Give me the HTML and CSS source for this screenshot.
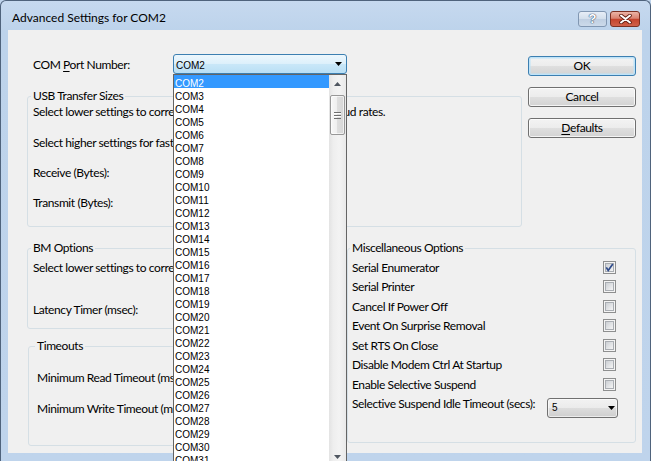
FILE: index.html
```html
<!DOCTYPE html>
<html>
<head>
<meta charset="utf-8">
<title>Advanced Settings for COM2</title>
<link rel="stylesheet" href="styles.css">
</head>
<body>
<div class="window">
  <div class="titlebar">
    <div class="title">Advanced Settings for COM2</div>
    <div class="caption-btns">
      <div class="cap help">?</div>
      <div class="cap close">
        <svg width="13" height="10" viewBox="0 0 13 10"><path d="M2 1.5L11 8.5M11 1.5L2 8.5" stroke="#5e1c10" stroke-width="3.6" stroke-linecap="round"/><path d="M2 1.5L11 8.5M11 1.5L2 8.5" stroke="#fff" stroke-width="2" stroke-linecap="round"/></svg>
      </div>
    </div>
  </div>
  <div class="content">
    <div class="top">
      <div class="left">
        <div class="port-row">
          <span class="port-label">COM <u>P</u>ort Number:</span>
          <div class="combo hot"><span class="combo-text">COM2</span><svg class="arrow" width="7" height="4" viewBox="0 0 7 4"><path d="M0 0H7L3.5 4Z" fill="#000"/></svg></div>
        </div>
        <fieldset class="group usb">
          <legend>USB Transfer Sizes</legend>
          <div class="line">Select lower settings to correct performance problems at low baud rates.</div>
          <div class="line g16">Select higher settings for faster performance.</div>
          <div class="line g15">Receive (Bytes):</div>
          <div class="line g15">Transmit (Bytes):</div>
        </fieldset>
      </div>
      <div class="buttons">
        <div class="btn default">OK</div>
        <div class="btn">Cancel</div>
        <div class="btn"><u>D</u>efaults</div>
      </div>
    </div>
    <div class="bottom">
      <div class="bottom-left">
        <fieldset class="group bm">
          <legend>BM Options</legend>
          <div class="line clip g4">Select lower settings to correct response problems.</div>
          <div class="line clip g27">Latency Timer (msec):</div>
        </fieldset>
        <fieldset class="group timeouts">
          <legend>Timeouts</legend>
          <div class="line clip g16">Minimum Read Timeout (msec):</div>
          <div class="line clip g16">Minimum Write Timeout (msec):</div>
        </fieldset>
      </div>
      <fieldset class="group misc">
        <legend>Miscellaneous Options</legend>
        <div class="opt"><span>Serial Enumerator</span>
          <svg class="chk" width="13" height="13" viewBox="0 0 13 13"><defs><linearGradient id="cbg" x1="0" y1="0" x2="1" y2="1"><stop offset="0" stop-color="#c9cdd2"/><stop offset="1" stop-color="#f7f7f7"/></linearGradient></defs><rect x=".5" y=".5" width="12" height="12" fill="#f4f4f4" stroke="#8e8f8f"/><rect x="2.5" y="2.5" width="8" height="8" fill="url(#cbg)" stroke="#a9adb2"/><path d="M3.3 6.4L5.2 9.4L9.8 3" fill="none" stroke="#2f4b8a" stroke-width="1.7"/></svg></div>
        <div class="opt"><span>Serial Printer</span>
          <svg class="chk" width="13" height="13" viewBox="0 0 13 13"><rect x=".5" y=".5" width="12" height="12" fill="#f4f4f4" stroke="#8e8f8f"/><rect x="2.5" y="2.5" width="8" height="8" fill="url(#cbg)" stroke="#a9adb2"/></svg></div>
        <div class="opt"><span>Cancel If Power Off</span>
          <svg class="chk" width="13" height="13" viewBox="0 0 13 13"><rect x=".5" y=".5" width="12" height="12" fill="#f4f4f4" stroke="#8e8f8f"/><rect x="2.5" y="2.5" width="8" height="8" fill="url(#cbg)" stroke="#a9adb2"/></svg></div>
        <div class="opt"><span>Event On Surprise Removal</span>
          <svg class="chk" width="13" height="13" viewBox="0 0 13 13"><rect x=".5" y=".5" width="12" height="12" fill="#f4f4f4" stroke="#8e8f8f"/><rect x="2.5" y="2.5" width="8" height="8" fill="url(#cbg)" stroke="#a9adb2"/></svg></div>
        <div class="opt"><span>Set RTS On Close</span>
          <svg class="chk" width="13" height="13" viewBox="0 0 13 13"><rect x=".5" y=".5" width="12" height="12" fill="#f4f4f4" stroke="#8e8f8f"/><rect x="2.5" y="2.5" width="8" height="8" fill="url(#cbg)" stroke="#a9adb2"/></svg></div>
        <div class="opt"><span>Disable Modem Ctrl At Startup</span>
          <svg class="chk" width="13" height="13" viewBox="0 0 13 13"><rect x=".5" y=".5" width="12" height="12" fill="#f4f4f4" stroke="#8e8f8f"/><rect x="2.5" y="2.5" width="8" height="8" fill="url(#cbg)" stroke="#a9adb2"/></svg></div>
        <div class="opt"><span>Enable Selective Suspend</span>
          <svg class="chk" width="13" height="13" viewBox="0 0 13 13"><rect x=".5" y=".5" width="12" height="12" fill="#f4f4f4" stroke="#8e8f8f"/><rect x="2.5" y="2.5" width="8" height="8" fill="url(#cbg)" stroke="#a9adb2"/></svg></div>
        <div class="opt last"><span>Selective Suspend Idle Timeout (secs):</span>
          <div class="combo small"><span class="combo-text">5</span><svg class="arrow" width="7" height="4" viewBox="0 0 7 4"><path d="M0 0H7L3.5 4Z" fill="#000"/></svg></div>
        </div>
      </fieldset>
    </div>

    <div class="droplist">
      <div class="items">
        <div class="item sel">COM2</div>
        <div class="item">COM3</div>
        <div class="item">COM4</div>
        <div class="item">COM5</div>
        <div class="item">COM6</div>
        <div class="item">COM7</div>
        <div class="item">COM8</div>
        <div class="item">COM9</div>
        <div class="item">COM10</div>
        <div class="item">COM11</div>
        <div class="item">COM12</div>
        <div class="item">COM13</div>
        <div class="item">COM14</div>
        <div class="item">COM15</div>
        <div class="item">COM16</div>
        <div class="item">COM17</div>
        <div class="item">COM18</div>
        <div class="item">COM19</div>
        <div class="item">COM20</div>
        <div class="item">COM21</div>
        <div class="item">COM22</div>
        <div class="item">COM23</div>
        <div class="item">COM24</div>
        <div class="item">COM25</div>
        <div class="item">COM26</div>
        <div class="item">COM27</div>
        <div class="item">COM28</div>
        <div class="item">COM29</div>
        <div class="item">COM30</div>
        <div class="item">COM31</div>
      </div>
      <div class="vscroll">
        <div class="sb-btn"><svg width="7" height="4" viewBox="0 0 7 4"><path d="M3.5 0L7 4H0Z" fill="#4f5660"/></svg></div>
        <div class="thumb"><svg width="7" height="7" viewBox="0 0 7 7"><path d="M0 .5H7M0 3.5H7M0 6.5H7" stroke="#6f6f6f"/><path d="M0 1.5H7M0 4.5H7" stroke="#fff"/></svg></div>
        <div class="sb-fill"></div>
        <div class="sb-btn"><svg width="7" height="4" viewBox="0 0 7 4"><path d="M0 0H7L3.5 4Z" fill="#4f5660"/></svg></div>
      </div>
    </div>
  </div>
</div>
</body>
</html>
```

FILE: styles.css
```css
* { box-sizing: border-box; }
html, body { margin: 0; padding: 0; }
body {
  width: 651px;
  height: 461px;
  overflow: hidden;
  background: #bfd4ec;
  font-family: "Lato", "Open Sans", sans-serif;
  font-size: 12px;
  letter-spacing: -0.4px;
  color: #000;
}
u { text-decoration: underline; text-underline-offset: 2px; }

.window {
  width: 651px;
  height: 461px;
  border: 1px solid #4f637c;
  border-bottom: none;
  border-radius: 6px 6px 0 0;
  background: linear-gradient(#c6d9ef, #bdd3eb 30px, #bfd4ec);
  display: flex;
  flex-direction: column;
}

.titlebar {
  flex: none;
  height: 29px;
  display: flex;
  justify-content: space-between;
  align-items: flex-start;
  padding-left: 11px;
}
.title { margin-top: 9px; line-height: 15px; letter-spacing: 0; }
.caption-btns { display: flex; gap: 3px; margin-top: 10px; margin-right: 10px; }
.cap {
  height: 16px;
  border-radius: 3px;
  display: flex;
  align-items: center;
  justify-content: center;
}
.cap.help {
  width: 29px;
  border: 1px solid #8197b2;
  background: linear-gradient(#e7eef7, #d3dfec 48%, #bfcfe2 52%, #ccdaea);
  color: #fff;
  font: bold 13px "Liberation Sans", sans-serif;
  letter-spacing: 0;
  line-height: 14px;
  text-shadow: 0 0 1px #3f5470, 0 0 1px #3f5470, 0 0 1px #3f5470;
}
.cap.close {
  width: 30px;
  border: 1px solid #7b3022;
  background: linear-gradient(#ebb4a6, #d98270 45%, #c4442d 52%, #d0614a);
}

.content {
  flex: none;
  height: 423px;
  margin: 0 8px 0 7px;
  background: #f0f0f0;
  position: relative;
  padding: 0 6px 0 19px;
}

.top { display: flex; align-items: flex-start; }
.left { width: 495px; }
.port-row {
  display: flex;
  align-items: center;
  height: 20px;
  margin-top: 24px;
  padding-left: 6px;
}
.port-label { width: 140px; line-height: 15px; }

.combo {
  flex: none;
  height: 20px;
  border: 1px solid #707070;
  border-radius: 3px;
  display: flex;
  justify-content: space-between;
  align-items: flex-start;
  font-family: "Liberation Sans", Arial, sans-serif;
  font-size: 10px;
  letter-spacing: 0;
}
.combo .arrow { margin-top: 7px; flex: none; }
.combo.hot {
  width: 174px;
  border-color: #3c7fb1;
  background: linear-gradient(#edf7fd, #ddf0fb 48%, #c9e7f8 52%, #b9dff5);
  padding: 0 4px 0 2px;
}
.combo.hot .combo-text { line-height: 18px; margin-top: 2px; }
.combo.small {
  width: 71px;
  margin-top: 3.5px;
  margin-right: -2px;
  padding: 0 2px 0 4px;
  background: linear-gradient(#f2f2f2, #ebebeb 50%, #dddddd 50%, #cfcfcf);
  box-shadow: inset 0 0 0 1px rgba(255,255,255,.6);
}
.combo.small .combo-text { line-height: 16px; margin-top: 1px; }

.buttons {
  width: 108px;
  margin-left: 6px;
  margin-top: 26px;
  display: flex;
  flex-direction: column;
  gap: 11px;
}
.btn {
  height: 20px;
  border: 1px solid #707070;
  border-radius: 3px;
  background: linear-gradient(#f3f3f3, #ececec 50%, #dfdfdf 50%, #d3d3d3);
  box-shadow: inset 0 0 0 1px rgba(255,255,255,.75);
  text-align: center;
  line-height: 18px;
}
.btn.default {
  border-color: #3c7fb1;
  box-shadow: inset 0 0 0 1px #bfe3f8, inset 0 0 0 2px rgba(190,228,248,.5);
}

.group {
  margin: 0;
  min-width: 0;
  border: 1px solid #d5dfe5;
  border-radius: 3px;
}
.group legend {
  padding: 0 2px;
  margin-left: -2px;
  line-height: 16px;
}
.line { line-height: 15px; white-space: nowrap; }
.line.clip { overflow: hidden; }
.g4 { margin-top: 4px; }
.g15 { margin-top: 15px; }
.g16 { margin-top: 16px; }
.g27 { margin-top: 27px; }

.usb { margin-top: 14px; padding: 0 5px 16px 5px; }

.bottom { display: flex; align-items: flex-start; margin-top: 13px; }
.bottom-left { width: 308px; }
.bm { width: 308px; padding: 0 5px 11px 5px; }
.timeouts { width: 307px; margin-left: 1px; margin-top: 9px; padding: 0 8px 29px 8px; }
.misc { width: 289px; margin-left: 12px; padding: 1.5px 19px 24px 4px; }

.opt {
  display: flex;
  justify-content: space-between;
  align-items: center;
  height: 19.5px;
  line-height: 19.5px;
  white-space: nowrap;
}
.opt.last { align-items: flex-start; height: auto; }
.chk { flex: none; display: block; }

.droplist {
  position: absolute;
  left: 165px;
  top: 44px;
  width: 174px;
  height: 392px;
  border: 1px solid #646464;
  background: #fff;
  display: flex;
  z-index: 5;
  font-family: "Liberation Sans", Arial, sans-serif;
  font-size: 10px;
  letter-spacing: 0;
}
.items { flex: 1; overflow: hidden; }
.item {
  height: 13px;
  line-height: 17px;
  padding-left: 1px;
  white-space: nowrap;
}
.item.sel { background: #3399ff; color: #fff; }
.vscroll {
  width: 17px;
  flex: none;
  display: flex;
  flex-direction: column;
  background: linear-gradient(90deg, #e3e3e3, #eeeeee 25%, #f3f3f3 60%, #e9e9e9);
}
.sb-btn {
  height: 17px;
  flex: none;
  display: flex;
  align-items: center;
  justify-content: center;
}
.thumb {
  flex: none;
  height: 40px;
  margin: 3px 1px 0 1px;
  border: 1px solid #979797;
  border-radius: 2px;
  background: linear-gradient(90deg, #f7f7f7, #eeeeee 50%, #dedede 50%, #d6d6d6);
  box-shadow: inset 0 0 0 1px rgba(255,255,255,.6);
  display: flex;
  align-items: center;
  justify-content: center;
}
.sb-fill { flex: 1; }
```
